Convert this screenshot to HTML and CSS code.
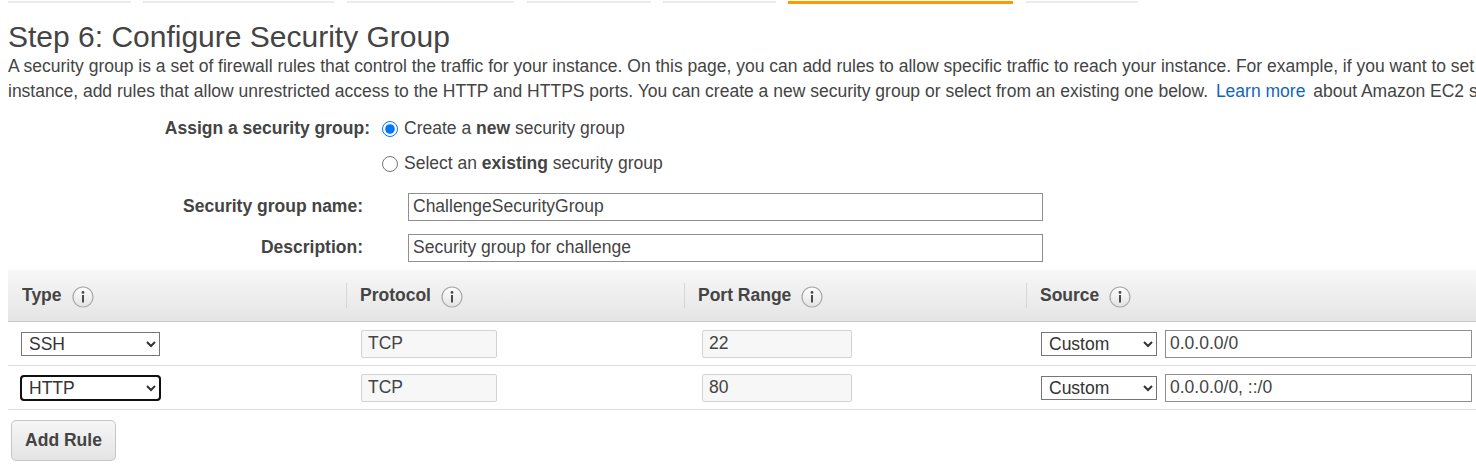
FILE: index.html
```html
<!DOCTYPE html>
<html>
<head>
<meta charset="utf-8">
<link rel="stylesheet" href="styles.css">
</head>
<body>
<div class="page">
  <div class="steps">
    <span class="step" style="width:123px"></span>
    <span class="step" style="width:191px"></span>
    <span class="step" style="width:167px"></span>
    <span class="step" style="width:124px"></span>
    <span class="step" style="width:113px"></span>
    <span class="step active" style="width:225px"></span>
    <span class="step" style="width:112px"></span>
  </div>

  <h1 class="title">Step 6: Configure Security Group</h1>
  <p class="intro">A security group is a set of firewall rules that control the traffic for your instance. On this page, you can add rules to allow specific traffic to reach your instance. For example, if you want to set up a web server and allow Internet traffic to reach your<br>instance, add rules that allow unrestricted access to the HTTP and HTTPS ports. You can create a new security group or select from an existing one below. <a class="link" href="#">Learn more</a> about Amazon EC2 security groups.</p>

  <div class="assign">
    <div class="assign-label">Assign a security group:</div>
    <div class="radios">
      <label class="radio-row"><input type="radio" name="sg" checked> <span>Create a <b>new</b> security group</span></label>
      <label class="radio-row"><input type="radio" name="sg"> <span>Select an <b>existing</b> security group</span></label>
    </div>
  </div>

  <div class="fields">
    <div class="field-label">Security group name:</div>
    <input class="text-input" type="text" value="ChallengeSecurityGroup">
    <div class="field-label">Description:</div>
    <input class="text-input" type="text" value="Security group for challenge">
  </div>

  <div class="rules">
    <div class="rules-head">
      <div class="hcell first">Type <svg class="info" viewBox="0 0 22 22"><defs><linearGradient id="g1" x1="0" y1="0" x2="0" y2="1"><stop offset="0" stop-color="#ffffff"/><stop offset="1" stop-color="#e2e2e2"/></linearGradient></defs><circle cx="11" cy="11" r="10" fill="url(#g1)" stroke="#a8a8a8" stroke-width="1.2"/><circle cx="11" cy="6.4" r="1.4" fill="#4a4a4a"/><rect x="10" y="9" width="2" height="7.5" fill="#4a4a4a"/></svg></div>
      <div class="hcell">Protocol <svg class="info" viewBox="0 0 22 22"><circle cx="11" cy="11" r="10" fill="url(#g1)" stroke="#a8a8a8" stroke-width="1.2"/><circle cx="11" cy="6.4" r="1.4" fill="#4a4a4a"/><rect x="10" y="9" width="2" height="7.5" fill="#4a4a4a"/></svg></div>
      <div class="hcell">Port Range <svg class="info" viewBox="0 0 22 22"><circle cx="11" cy="11" r="10" fill="url(#g1)" stroke="#a8a8a8" stroke-width="1.2"/><circle cx="11" cy="6.4" r="1.4" fill="#4a4a4a"/><rect x="10" y="9" width="2" height="7.5" fill="#4a4a4a"/></svg></div>
      <div class="hcell">Source <svg class="info" viewBox="0 0 22 22"><circle cx="11" cy="11" r="10" fill="url(#g1)" stroke="#a8a8a8" stroke-width="1.2"/><circle cx="11" cy="6.4" r="1.4" fill="#4a4a4a"/><rect x="10" y="9" width="2" height="7.5" fill="#4a4a4a"/></svg></div>
    </div>

    <div class="rules-row">
      <div class="cell c-type"><select class="sel sel-type"><option>SSH</option></select></div>
      <div class="cell c-proto"><input class="ro ro-proto" type="text" value="TCP" readonly></div>
      <div class="cell c-port"><input class="ro ro-port" type="text" value="22" readonly></div>
      <div class="cell c-src"><select class="sel sel-src"><option>Custom</option></select><input class="src-input" type="text" value="0.0.0.0/0"></div>
    </div>
    <div class="rules-row">
      <div class="cell c-type"><select class="sel sel-type focused"><option>HTTP</option></select></div>
      <div class="cell c-proto"><input class="ro ro-proto" type="text" value="TCP" readonly></div>
      <div class="cell c-port"><input class="ro ro-port" type="text" value="80" readonly></div>
      <div class="cell c-src"><select class="sel sel-src"><option>Custom</option></select><input class="src-input" type="text" value="0.0.0.0/0, ::/0"></div>
    </div>
  </div>

  <button class="add-btn" type="button">Add Rule</button>
</div>
</body>
</html>
```

FILE: styles.css
```css
html, body {
  margin: 0;
  padding: 0;
  background: #fff;
  overflow: hidden;
}
body {
  font-family: "Liberation Sans", Arial, sans-serif;
  font-size: 17.5px;
  color: #444;
}
.page {
  padding-left: 8px;
  width: 1468px;
}
.steps {
  display: flex;
  gap: 12px;
  margin-top: 1px;
  height: 2px;
}
.step {
  display: block;
  height: 2px;
  background: #ebebeb;
  flex: none;
}
.step:nth-child(3),
.step:nth-child(4),
.step:nth-child(7) {
  margin-left: 1px;
}
.step.active {
  background: #ff9900;
  height: 3px;
}
.title {
  margin: 17px 0 0 0;
  font-size: 30px;
  font-weight: normal;
  line-height: 34px;
  color: #444;
}
.intro {
  margin: 0;
  line-height: 25px;
  white-space: nowrap;
}
.link {
  color: #1166bb;
  text-decoration: none;
  margin: 0 3px;
}
.assign {
  display: flex;
  margin-top: 7px;
}
.assign-label {
  width: 362px;
  text-align: right;
  font-weight: bold;
  line-height: 35px;
  flex: none;
}
.radios {
  display: flex;
  flex-direction: column;
  padding-left: 12px;
}
.radio-row {
  display: flex;
  align-items: center;
  height: 35px;
  gap: 6px;
}
.radio-row input {
  width: 16px;
  height: 16px;
  margin: 0;
}
.fields {
  display: grid;
  grid-template-columns: 355px 635px;
  column-gap: 45px;
  grid-auto-rows: 41px;
  align-items: center;
  margin-top: 5px;
}
.field-label {
  text-align: right;
  font-weight: bold;
}
.text-input {
  box-sizing: border-box;
  width: 635px;
  height: 28px;
  border: 1px solid #8f8f8f;
  padding: 0 4px;
  font: inherit;
  color: #444;
  background: #fff;
}
.rules {
  margin-top: 2px;
}
.rules-head {
  display: grid;
  grid-template-columns: 338px 338px 342px 1fr;
  height: 51px;
  background: linear-gradient(#f7f7f7, #e5e5e5);
  border-bottom: 1px solid #c8c8c8;
}
.hcell {
  display: flex;
  align-items: center;
  gap: 10px;
  padding-left: 14px;
  font-weight: bold;
  position: relative;
}
.hcell::before {
  content: "";
  position: absolute;
  left: 0;
  top: 13px;
  height: 25px;
  width: 1px;
  background: #d6d6d6;
}
.hcell.first::before {
  display: none;
}
.info {
  width: 22px;
  height: 22px;
  margin-top: 3px;
  flex: none;
}
.rules-row {
  display: grid;
  grid-template-columns: 338px 338px 342px 1fr;
  height: 43px;
  border-bottom: 1px solid #dcdcdc;
}
.cell {
  display: flex;
  align-items: center;
}
.c-type { padding-left: 13px; }
.c-proto { padding-left: 15px; }
.c-port { padding-left: 18px; }
.c-src { padding-left: 15px; gap: 8px; }
.sel {
  box-sizing: border-box;
  height: 24px;
  font: inherit;
  font-size: 17.5px;
  color: #333;
  border: 1px solid #767676;
  border-radius: 0;
  background: #fff;
  padding: 0 0 0 3px;
}
.sel-type { width: 139px; }
.sel-src { width: 116px; }
.sel.focused {
  outline: 2px solid #101010;
  outline-offset: -1px;
  border-radius: 3px;
}
.ro {
  box-sizing: border-box;
  height: 28px;
  border: 1px solid #d3d3d3;
  border-radius: 2px;
  background: #f7f7f7;
  padding: 0 6px;
  font: inherit;
  color: #444;
}
.ro-proto { width: 136px; }
.ro-port { width: 150px; }
.src-input {
  box-sizing: border-box;
  width: 307px;
  height: 28px;
  border: 1px solid #8f8f8f;
  padding: 0 4px;
  font: inherit;
  color: #444;
}
.add-btn {
  display: block;
  margin: 10px 0 0 3px;
  width: 105px;
  height: 41px;
  border: 1px solid #c6c6c6;
  border-radius: 5px;
  background: linear-gradient(#f6f6f6, #e4e4e4);
  font: inherit;
  font-weight: bold;
  color: #444;
  padding: 0;
}
```
